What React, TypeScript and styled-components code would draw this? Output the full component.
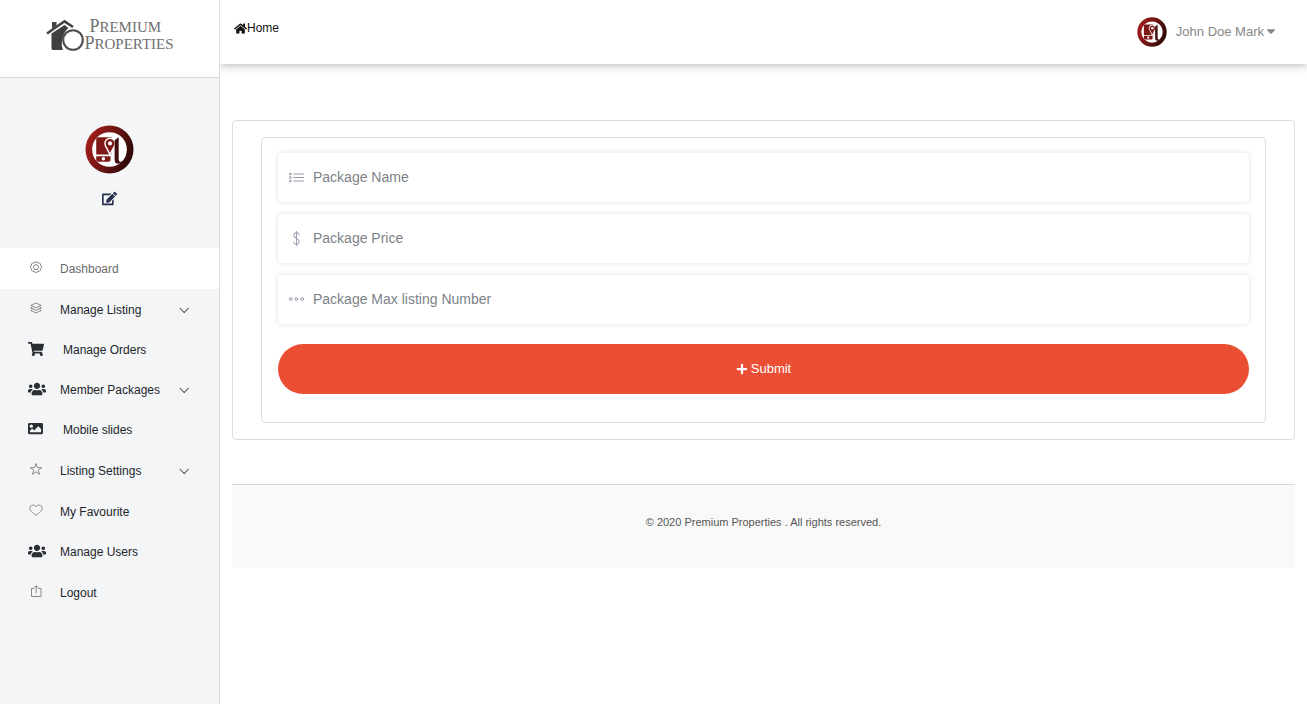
import React from "react";
import styled, { createGlobalStyle } from "styled-components";
import {
  FaCaretDown,
  FaEdit,
  FaHome,
  FaImage,
  FaPlus,
  FaShoppingCart,
  FaUsers,
} from "react-icons/fa";
import { TfiList, TfiMoney, TfiMore } from "react-icons/tfi";

const GlobalStyle = createGlobalStyle`
  *, *::before, *::after { box-sizing: border-box; }
  body {
    margin: 0;
    background: #fff;
    color: #212529;
    font-family: "Liberation Sans", Arial, Helvetica, sans-serif;
    font-size: 12px;
  }
  button, input { font-family: inherit; }
  a { color: inherit; text-decoration: none; }
  svg { display: block; flex: none; }
`;

const Page = styled.div`
  display: grid;
  grid-template-columns: 220px minmax(0, 1fr);
  min-height: 100vh;
`;

const Sidebar = styled.aside`
  background: #f4f5f7;
  border-right: 1px solid #dcdee0;
`;

const LogoLink = styled.a`
  display: flex;
  align-items: center;
  justify-content: center;
  height: 78px;
  padding-bottom: 8px;
  background: #fff;
  border-bottom: 1px solid #d8dadc;
`;

const LogoText = styled.span`
  display: flex;
  flex-direction: column;
  color: #707070;
  font-family: "Liberation Serif", "Times New Roman", serif;
  font-size: 15px;
  line-height: 16px;
  text-transform: uppercase;
`;

const LogoLine = styled.span<{ $indent?: boolean }>`
  padding-left: ${(p) => (p.$indent ? 5 : 0)}px;
  &::first-letter { font-size: 18px; line-height: 16px; }
`;

const Profile = styled.div`
  display: flex;
  flex-direction: column;
  align-items: center;
  gap: 17px;
  height: 170px;
  padding-top: 47px;
`;

const EditButton = styled.button`
  padding: 0;
  border: 0;
  background: none;
  color: #27314f;
  cursor: pointer;
`;

const Menu = styled.ul`
  margin: 0;
  padding: 0;
  list-style: none;
`;

const MenuLink = styled.a<{ $active?: boolean; $solid?: boolean }>`
  display: flex;
  align-items: center;
  height: ${(p) => (p.$solid ? 40 : 41)}px;
  padding: 0 30px 0 28px;
  background: ${(p) => (p.$active ? "#fff" : "transparent")};
  color: ${(p) => (p.$active ? "#6b6b6b" : "#212529")};
`;

const MenuIcon = styled.span<{ $solid?: boolean }>`
  display: flex;
  width: 32px;
  padding: 0 0 3px ${(p) => (p.$solid ? 0 : 1)}px;
  color: ${(p) => (p.$solid ? "#2b2e33" : "#777")};
`;

const MenuLabel = styled.span<{ $spaced?: boolean }>`
  flex: 1;
  padding-left: ${(p) => (p.$spaced ? 3 : 0)}px;
`;

const Main = styled.div`
  min-width: 0;
`;

const Header = styled.header`
  display: flex;
  justify-content: space-between;
  height: 64px;
  padding: 0 29px 0 14px;
  background: #fff;
  box-shadow: 0 2px 8px rgba(0, 0, 0, 0.25);
  clip-path: inset(0 0 -16px 0);
`;

const HomeLink = styled.a`
  display: flex;
  align-items: center;
  height: 56px;
  color: #111;
`;

const UserButton = styled.button`
  display: flex;
  align-items: center;
  gap: 9px;
  padding: 0;
  border: 0;
  background: none;
  color: #888;
  font-size: 13px;
  cursor: pointer;
`;

const UserName = styled.span`
  display: flex;
  align-items: center;
  padding-bottom: 2px;
`;

const Content = styled.main`
  padding: 56px 12px 0;
`;

const Card = styled.section`
  padding: 16px 28px;
  border: 1px solid #dcdddf;
  border-radius: 4px;
`;

const Form = styled.form`
  display: flex;
  flex-direction: column;
  gap: 12px;
  padding: 15px 16px 28px;
  border: 1px solid #dcdddf;
  border-radius: 4px;
`;

const Field = styled.label`
  display: flex;
  align-items: center;
  gap: 9px;
  height: 49px;
  padding: 0 11px 1px;
  border-radius: 4px;
  background: #fff;
  box-shadow: 0 0 5px rgba(80, 80, 180, 0.2);
  color: #9497ab;
`;

const TextInput = styled.input`
  flex: 1;
  min-width: 0;
  padding: 0;
  border: 0;
  outline: 0;
  background: none;
  color: #495057;
  font-size: 14px;
  line-height: 20px;
  &::placeholder { color: #7c8288; opacity: 1; }
`;

const SubmitButton = styled.button`
  display: flex;
  align-items: center;
  justify-content: center;
  gap: 3px;
  height: 50px;
  margin-top: 8px;
  padding-bottom: 2px;
  border: 0;
  border-radius: 25px;
  background: #ea4f33;
  color: #fff;
  font-size: 13px;
  cursor: pointer;
`;

const Footer = styled.footer`
  height: 84px;
  margin-top: 44px;
  padding-top: 30px;
  border-top: 1px solid #d8dadc;
  background: #f9f9f9;
  color: #555;
  font-size: 11px;
  line-height: 15px;
  text-align: center;
`;

function HouseMark() {
  return (
    <svg width="39" height="32" viewBox="0 0 39 32" aria-hidden="true">
      <path d="M7 3h4.500v3.500L7 10z" fill="#444" />
      <path d="M2 14.500 19.500 2.300 28 8" fill="none" stroke="#444" strokeWidth="2.600" />
      <path d="M6.500 14.500 19.500 6l4 3C18 13 15 24 18 31H8.500c-1.500 0-2-.6-2-2z" fill="#3f3f3f" />
      <circle cx="28" cy="21" r="9.800" fill="#fff" stroke="#4a4a4a" strokeWidth="2" />
    </svg>
  );
}

function Emblem({ size, id }: { size: number; id: string }) {
  const paint = `url(#${id})`;
  return (
    <svg width={size} height={size} viewBox="0 0 48 48" aria-hidden="true">
      <defs>
        <linearGradient id={id} x1="0" y1="0.300" x2="1" y2="0.700">
          <stop offset="0" stopColor="#a51f1b" />
          <stop offset="0.500" stopColor="#6b1513" />
          <stop offset="1" stopColor="#260706" />
        </linearGradient>
      </defs>
      <circle cx="24" cy="24" r="23.500" fill={paint} />
      <circle cx="24" cy="24" r="17" fill="#fff" />
      <path d="M13 12h13v17H11V14c0-1.300.7-2 2-2z" fill="#7d1917" />
      <path d="M11 30.500h14v3.500c0 1-1 2-2 2H13c-1 0-2-1-2-2z" fill="#7d1917" />
      <circle cx="18" cy="33" r="1.700" fill="#fff" />
      <path d="M24.500 29c-3-6.500-5-8.500-5-11a5 5 0 0 1 10 0c0 2.500-2 4.500-5 11z" fill="#7d1917" stroke="#fff" strokeWidth="1.400" />
      <circle cx="24.500" cy="18" r="2" fill="#fff" />
      <path d="M29 15l4-3v20c0 4 1 5 4 3-3 4-8 4-8-1z" fill="#41100e" />
    </svg>
  );
}

function LineIcon({ children }: { children: React.ReactNode }) {
  return (
    <svg
      width="14"
      height="14"
      viewBox="0 0 14 14"
      fill="none"
      stroke="currentColor"
      strokeWidth="0.850"
      strokeLinejoin="round"
      aria-hidden="true"
    >
      {children}
    </svg>
  );
}

const GearIcon = () => (
  <LineIcon>
    <path d="M5.700 2h2.600l.7 1.100 1.300-.3 1.300 1.400-.3 1.200 1.100.7v2l-1.100.8.3 1.200-1.300 1.400-1.300-.3-.7 1.100H5.700L5 11.200l-1.300.3-1.300-1.400.3-1.200-1.100-.8v-2l1.100-.7-.3-1.200 1.300-1.400 1.300.3z" />
    <circle cx="7" cy="7.200" r="2.500" />
  </LineIcon>
);

const LayersIcon = () => (
  <LineIcon>
    <path d="M7 2 12.300 4.400 7 6.800 1.700 4.400z" />
    <path d="M3.300 6.100 1.700 6.900 7 9.300l5.300-2.400-1.600-.8" />
    <path d="M3.300 8.600 1.700 9.400 7 11.800l5.300-2.400-1.600-.8" />
  </LineIcon>
);

const StarIcon = () => (
  <LineIcon>
    <path d="M7 1.500 8.400 5.700h4.300L9.200 8.200l1.300 4.200L7 9.800l-3.500 2.600 1.300-4.200-3.500-2.500h4.300z" />
  </LineIcon>
);

const HeartIcon = () => (
  <LineIcon>
    <path d="M7 12.200C3.500 9.600.8 7.800.8 5.200c0-3.200 4.600-4.400 6.200-1.300 1.600-3.100 6.200-1.900 6.200 1.300 0 2.600-2.700 4.400-6.200 7z" />
  </LineIcon>
);

const ExportIcon = () => (
  <LineIcon>
    <path d="M5.200 4.500H2.500v8h9.500v-8H9.300" />
    <path d="M7.200 9V2M5.200 3.700l2-2 2 2" />
  </LineIcon>
);

const ChevronDown = () => (
  <svg width="10" height="8" viewBox="0 0 10 8" fill="none" stroke="#444" strokeWidth="1.050" aria-hidden="true">
    <path d="M.8 2 5.200 6.500 9.600 2" />
  </svg>
);

type MenuItem = {
  label: string;
  icon: React.ReactNode;
  solid?: boolean;
  active?: boolean;
  spaced?: boolean;
  expandable?: boolean;
};

const menuItems: MenuItem[] = [
  { label: "Dashboard", icon: <GearIcon />, active: true },
  { label: "Manage Listing", icon: <LayersIcon />, expandable: true },
  { label: "Manage Orders", icon: <FaShoppingCart size={16} />, solid: true, spaced: true },
  { label: "Member Packages", icon: <FaUsers size={18} />, solid: true, expandable: true },
  { label: "Mobile slides", icon: <FaImage size={15} />, solid: true, spaced: true },
  { label: "Listing Settings", icon: <StarIcon />, expandable: true },
  { label: "My Favourite", icon: <HeartIcon /> },
  { label: "Manage Users", icon: <FaUsers size={18} />, solid: true },
  { label: "Logout", icon: <ExportIcon /> },
];

const fields = [
  { name: "packageName", label: "Package Name", icon: <TfiList size={15} /> },
  { name: "packagePrice", label: "Package Price", icon: <TfiMoney size={15} /> },
  { name: "maxListings", label: "Package Max listing Number", icon: <TfiMore size={15} /> },
];

export default function App() {
  return (
    <>
      <GlobalStyle />
      <Page>
        <Sidebar>
          <LogoLink href="#">
            <HouseMark />
            <LogoText>
              <LogoLine $indent>Premium</LogoLine>
              <LogoLine>Properties</LogoLine>
            </LogoText>
          </LogoLink>
          <Profile>
            <Emblem size={49} id="emblem-profile" />
            <EditButton type="button" aria-label="Edit profile">
              <FaEdit size={15} />
            </EditButton>
          </Profile>
          <nav>
            <Menu>
              {menuItems.map((item) => (
                <li key={item.label}>
                  <MenuLink href="#" $active={item.active} $solid={item.solid}>
                    <MenuIcon $solid={item.solid}>{item.icon}</MenuIcon>
                    <MenuLabel $spaced={item.spaced}>{item.label}</MenuLabel>
                    {item.expandable && <ChevronDown />}
                  </MenuLink>
                </li>
              ))}
            </Menu>
          </nav>
        </Sidebar>
        <Main>
          <Header>
            <HomeLink href="#">
              <FaHome size={13} />
              Home
            </HomeLink>
            <UserButton type="button">
              <Emblem size={30} id="emblem-user" />
              <UserName>
                John Doe Mark
                <FaCaretDown size={14} />
              </UserName>
            </UserButton>
          </Header>
          <Content>
            <Card>
              <Form onSubmit={(e) => e.preventDefault()}>
                {fields.map((field) => (
                  <Field key={field.name}>
                    {field.icon}
                    <TextInput
                      type="text"
                      name={field.name}
                      placeholder={field.label}
                      aria-label={field.label}
                    />
                  </Field>
                ))}
                <SubmitButton type="submit">
                  <FaPlus size={12} />
                  Submit
                </SubmitButton>
              </Form>
            </Card>
            <Footer>© 2020 Premium Properties . All rights reserved.</Footer>
          </Content>
        </Main>
      </Page>
    </>
  );
}
